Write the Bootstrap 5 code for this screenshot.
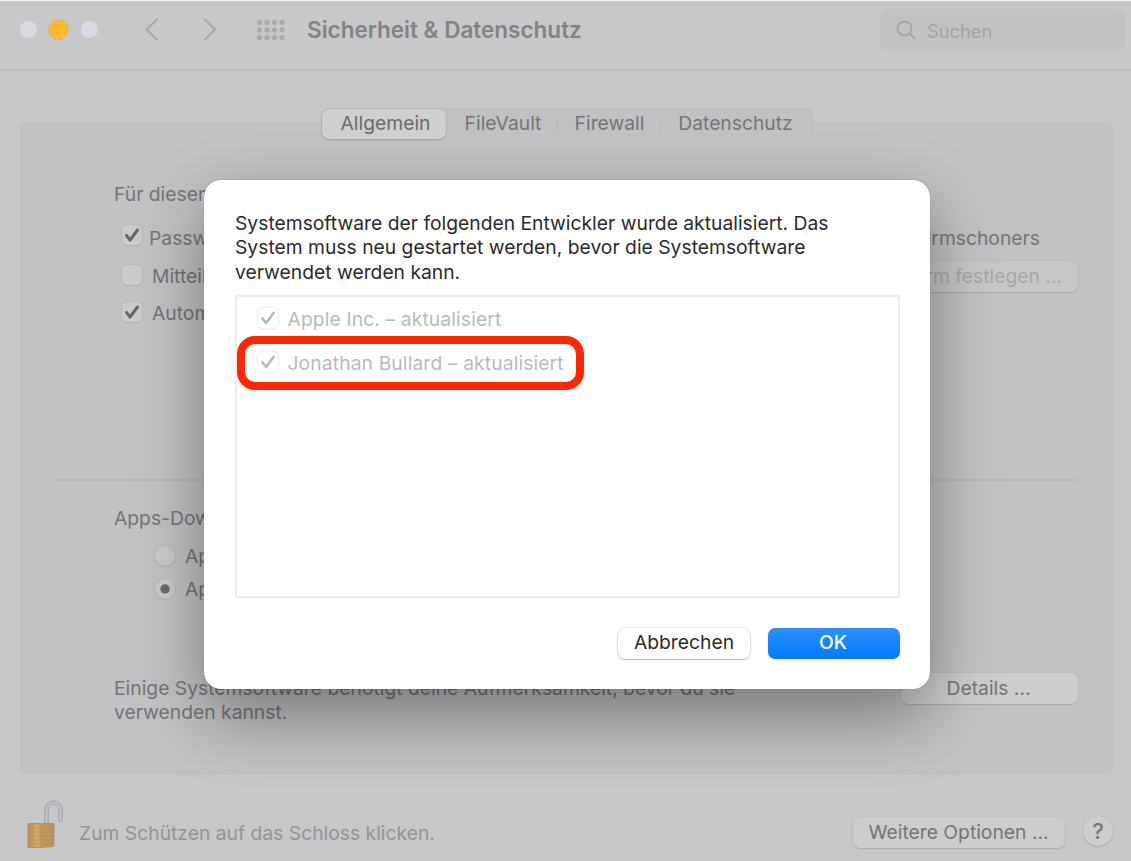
<!DOCTYPE html>
<html lang="de">
<head>
<meta charset="utf-8">
<meta name="viewport" content="width=device-width, initial-scale=1">
<title>Sicherheit &amp; Datenschutz</title>
<link rel="stylesheet" href="https://cdn.jsdelivr.net/npm/bootstrap@5.3.0/dist/css/bootstrap.min.css">
<style>
  body { width: 1131px; height: 861px; overflow: hidden; background: #c6c7c9; color: #747577;
         font-family: Inter, "Liberation Sans", sans-serif; font-size: 19.3px; line-height: 24.3px; border-top: 1px solid #f2f2f2; }
  .titlebar { height: 70px; padding: 0 6px 12px 20px; background: #c7c8ca; border-bottom: 2px solid #bcbdbf; }
  .light { width: 17px; height: 17px; border-radius: 50%; background: #d9dae5; }
  .light.on { width: 19px; height: 19px; background: #fdba2e; box-shadow: 0 0 0 .5px #e5a52c; }
  .wtitle { font-size: 22.5px; font-weight: 600; color: #828385; }
  .search { width: 245px; height: 42px; border-radius: 9px; background: #c1c2c4; color: #a3a4a6; padding-left: 16px; font-size: 18.3px; }
  .tabs { width: 492px; height: 33px; margin: 37px 0 -19px 321px; border-radius: 8px; background: #c0c1c3; border: 1px solid #bbbcbe; z-index: 1; }
  .tabs .seg { height: 30px; line-height: 28px; margin-top: -1px; text-align: center; color: #747577; }
  .tabs .seg.on { background: #cfcfce; border-radius: 7px; box-shadow: 0 1px 1.500px rgba(0,0,0,.15), 0 0 0 .5px rgba(0,0,0,.08); color: #6c6c6d; }
  .tabs .bar { width: 1px; height: 18px; background: #b5b6b8; }
  .panel { width: 1093px; height: 652px; margin-left: 20px; border: 1px solid #bdbec0; border-radius: 7px; background: #c1c2c4; padding: 59px 34px 0 93px; }
  .line { height: 24px; white-space: nowrap; }
  .panel .line > span:not(.box):not(.push) { padding-top: 2px; }
  .panel .line > .dot + span { padding-top: 0 !important; }
  .box { width: 20px; height: 20px; border-radius: 5px; background: #cbcbcb; box-shadow: 0 0 0 1px rgba(0,0,0,.04), 0 1px 1px rgba(0,0,0,.05); flex: none; }
  .dot { border-radius: 50%; }
  .push { height: 31px; border-radius: 7px; background: #cdcdcd; color: #747577; line-height: 30px; text-align: center; box-shadow: 0 1px 1.500px rgba(0,0,0,.12), 0 0 0 .5px rgba(0,0,0,.06); }
  .rule { height: 2px; background: #b7b8ba; margin: 155px 0 25px -58px; }
  .sheet { left: 204px; top: 180px; width: 726px; height: 509px; background: #fff; border-radius: 17px; padding: 31px 30px 0 31px; color: #2b2b2c;
           box-shadow: 0 0 1px rgba(0,0,0,.45), 0 26px 66px rgba(0,0,0,.38); }
  .list { height: 303px; margin-top: 11px; border: 2px solid #ebebeb; color: #bababb; padding-left: 20.500px; letter-spacing: .11px; }
  .list .line { height: 44px; }
  .list .box { background: #fff; box-shadow: 0 0 0 1.2px #f0f0f0, 0 1px 2px #e2e2e2; margin-top: -1px; }
  .marker { left: 237px; top: 336px; width: 347px; height: 54px; border: 8px solid #ff2700; border-radius: 18px; }
  .cancel { width: 132px; line-height: 29px; background: #fff; color: #2b2b2c; box-shadow: 0 1px 2px rgba(0,0,0,.24), 0 0 0 .6px rgba(0,0,0,.11); }
  .ok { width: 132px; line-height: 29px; padding-right: 2px; background: linear-gradient(#2b90ff, #007aff); color: #fff; font-weight: 500; box-shadow: none; }
</style>
</head>
<body>
<header class="titlebar d-flex align-items-center">
  <span class="light" style="margin-top:1px"></span><span class="light on" style="margin:1px 0 0 12px"></span><span class="light" style="margin:1px 0 0 13px"></span>
  <svg width="74" height="24" viewBox="0 0 74 24" style="margin-left:46px" fill="none" stroke="#a8a9ab" stroke-width="2.2" stroke-linecap="round" stroke-linejoin="round"><path d="M13 2.500 2.500 12.500 13 22.500M61 2.500 71 12.500 61 22.500"/></svg>
  <svg width="28" height="21" viewBox="0 0 28 21" style="margin:2px 0 0 39px" fill="#a9aaac"><g id="r"><rect x="0" y="0" width="5" height="5" rx="1.800"/><rect x="7.500" y="0" width="5" height="5" rx="1.800"/><rect x="15" y="0" width="5" height="5" rx="1.800"/><rect x="22.500" y="0" width="5" height="5" rx="1.800"/></g><use href="#r" y="7.500"/><use href="#r" y="15"/></svg>
  <span class="wtitle" style="margin:2px 0 0 22px">Sicherheit &amp; Datenschutz</span>
  <div class="search d-flex align-items-center ms-auto" style="margin-top:2px">
    <svg width="21" height="21" viewBox="0 0 21 21" fill="none" stroke="#a5a6a8" stroke-width="2" stroke-linecap="round"><circle cx="8.500" cy="8.500" r="7"/><path d="m13.800 13.800 4.700 4.700"/></svg>
    <span style="margin:2px 0 0 10px">Suchen</span>
  </div>
</header>
<nav class="tabs d-flex align-items-center position-relative">
  <span class="seg on" style="width:124px;padding-left:3px">Allgemein</span>
  <span class="seg" style="width:111px;padding-left:3px">FileVault</span><i class="bar"></i>
  <span class="seg" style="width:102px;padding-left:1px">Firewall</span><i class="bar"></i>
  <span class="seg flex-fill" style="padding-right:2px">Datenschutz</span>
</nav>
<main class="panel">
  <div class="line">Für diesen</div>
  <div class="line d-flex align-items-center" style="margin-top:17px;padding-left:8px">
    <span class="box"><svg width="20" height="20" viewBox="0 0 20 20" class="d-block" fill="none" stroke="#666768" stroke-width="3" stroke-linecap="round" stroke-linejoin="round"><path d="m4.500 10.500 3.600 4.500 7.400-10"/></svg></span>
    <span style="margin:4px 0 0 7px">Passwort</span><span class="ms-auto" style="margin:4px 38px 0 0">Bildschirmschoners</span>
  </div>
  <div class="line d-flex align-items-center" style="margin-top:16px;padding-left:8px">
    <span class="box"></span><span style="margin-left:10px">Mitteil</span>
    <span class="push ms-auto" style="width:240px;margin-top:2px;background:#c7c7c8;color:#a7a8aa;text-align:right;padding-right:16px">Bildschirm festlegen ...</span>
  </div>
  <div class="line d-flex align-items-center" style="margin-top:13px;padding-left:8px">
    <span class="box"><svg width="20" height="20" viewBox="0 0 20 20" class="d-block" fill="none" stroke="#666768" stroke-width="3" stroke-linecap="round" stroke-linejoin="round"><path d="m4.500 10.500 3.600 4.500 7.400-10"/></svg></span>
    <span style="margin-left:10px">Automat</span>
  </div>
  <div class="rule"></div>
  <div class="line">Apps-Down</div>
  <div class="line d-flex align-items-center" style="margin-top:14px;padding-left:41px"><span class="box dot"></span><span style="margin-left:10px">App</span></div>
  <div class="line d-flex align-items-center" style="margin-top:9px;padding-left:41px"><span class="box dot"><svg width="20" height="20" class="d-block"><circle cx="10" cy="10" r="4.700" fill="#6b6c6d"/></svg></span><span style="margin-left:10px">App</span></div>
  <div class="d-flex justify-content-between text-nowrap" style="margin-top:75px">
    <div>Einige Systemsoftware benötigt deine Aufmerksamkeit, bevor du sie<br>verwenden kannst.</div>
    <div class="push" style="width:177px;margin-top:-3px;padding-right:2px">Details ...</div>
  </div>
</main>
<footer class="d-flex align-items-center" style="margin:27px 18px 0 27px;height:50px">
  <svg width="38" height="48" viewBox="0 0 38 48" style="margin-top:-4px"><defs><linearGradient id="b"><stop stop-color="#bd8f55"/><stop offset=".4" stop-color="#d3ad76"/><stop offset=".48" stop-color="#c49458"/><stop offset="1" stop-color="#bd9363"/></linearGradient></defs>
    <path d="M19.500 24V11c0-11 14-11 14 0v9" fill="none" stroke="#a0a6a8" stroke-width="4.600" stroke-linecap="round"/><path d="M19.500 24V11c0-11 14-11 14 0v9" fill="none" stroke="#bac1c2" stroke-width="2.600" stroke-linecap="round"/>
    <path d="M2 23.500h24q1 0 1 1v21l-1 1-11 1H2q-1 0-1-1v-22q0-1 1-1z" fill="url(#b)" stroke="#a77d4b" stroke-width=".6"/><path d="M2 28h24M2 32h24M2 36h24M2 40h24M2 44h24" stroke="#a97b43" stroke-width=".7" opacity=".4"/></svg>
  <span style="margin:14px 0 0 14px;color:#939496">Zum Schützen auf das Schloss klicken.</span>
  <span class="push ms-auto" style="width:212px;margin-top:12px;padding-right:1px">Weitere Optionen ...</span>
  <span class="push rounded-circle" style="width:30px;height:30px;margin:10px 0 0 18px;font-size:22px;font-weight:500">?</span>
</footer>
<section class="sheet position-absolute">
  <div class="text-nowrap">Systemsoftware der folgenden Entwickler wurde aktualisiert. Das<br>System muss neu gestartet werden, bevor die Systemsoftware<br>verwendet werden kann.</div>
  <div class="list">
    <div class="line d-flex align-items-center"><span class="box"><svg width="20" height="20" viewBox="0 0 20 20" class="d-block" fill="none" stroke="#bababa" stroke-width="2.800" stroke-linecap="round" stroke-linejoin="round"><path d="m4.500 10.500 3.600 4.500 7.400-10"/></svg></span><span style="margin-left:10px">Apple Inc. – aktualisiert</span></div>
    <div class="line d-flex align-items-center"><span class="box"><svg width="20" height="20" viewBox="0 0 20 20" class="d-block" fill="none" stroke="#bababa" stroke-width="2.800" stroke-linecap="round" stroke-linejoin="round"><path d="m4.500 10.500 3.600 4.500 7.400-10"/></svg></span><span style="margin-left:10px">Jonathan Bullard – aktualisiert</span></div>
  </div>
  <div class="d-flex justify-content-end" style="margin-top:30px;gap:18px"><span class="push cancel">Abbrechen</span><span class="push ok">OK</span></div>
</section>
<div class="marker position-absolute"></div>
<script src="https://cdn.jsdelivr.net/npm/bootstrap@5.3.0/dist/js/bootstrap.bundle.min.js"></script>
</body>
</html>
